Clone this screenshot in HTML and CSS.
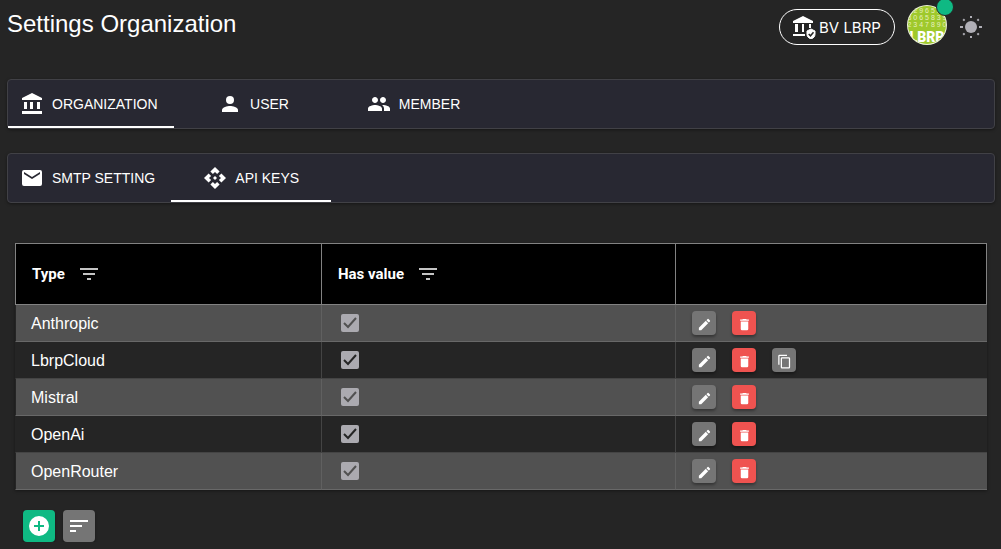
FILE: index.html
```html
<!DOCTYPE html>
<html lang="en">
<head>
<meta charset="utf-8">
<meta name="viewport" content="width=device-width, initial-scale=1">
<title>Settings Organization</title>
<link rel="stylesheet" href="styles.css">
</head>
<body>
<svg class="sprite" aria-hidden="true">
  <symbol id="bank" viewBox="0 0 24 24"><path d="M12 1 2 6v2h20V6zM4 10h3v7H4zM10 10h3v7h-3zM17 10h3v7h-3zM2 19h20v3H2z"/></symbol>
  <symbol id="filter" viewBox="0 0 24 24"><path d="M3 6h18v2H3zM6 11h12v2H6zM10 16h4v2h-4z"/></symbol>
  <symbol id="tick" viewBox="0 0 18 18"><path d="M3 9l4 4 8-9" fill="none" stroke="currentColor" stroke-width="2"/></symbol>
  <symbol id="pencil" viewBox="0 0 24 24"><path d="M3 17.250V21h3.750L17.810 9.940l-3.750-3.750L3 17.250zM20.710 7.040a1 1 0 0 0 0-1.410l-2.340-2.340a1 1 0 0 0-1.410 0l-1.830 1.830 3.750 3.750 1.830-1.830z"/></symbol>
  <symbol id="trash" viewBox="0 0 24 24"><path d="M6 19a2 2 0 0 0 2 2h8a2 2 0 0 0 2-2V7H6v12zM19 4h-3.500l-1-1h-5l-1 1H5v2h14V4z"/></symbol>
  <symbol id="copy" viewBox="0 0 24 24"><path d="M16 1H4a2 2 0 0 0-2 2v14h2V3h12V1zm3 4H8a2 2 0 0 0-2 2v14a2 2 0 0 0 2 2h11a2 2 0 0 0 2-2V7a2 2 0 0 0-2-2zm0 16H8V7h11v14z"/></symbol>
</svg>
<div class="page">
  <header class="header">
    <h1 class="title">Settings Organization</h1>
    <div class="tools">
      <button class="org-button" type="button">
        <svg class="icon" viewBox="0 0 24 24" aria-hidden="true"><path d="M11 1 1 6v2h20V6zM3 9h3v8H3zM10 9h2v8h-2zM17 9h2v4h-2zM1 19h12v2H1z"/><path d="M19 14l4 2v3c0 2.500-1.500 4.200-4 5-2.500-.800-4-2.500-4-5v-3z" stroke="currentColor" stroke-linejoin="round"/><path d="M16.700 19l1.800 1.800 3-3.500" fill="none" stroke="#252525" stroke-width="1.500"/></svg>
        <span>BV LBRP</span>
      </button>
      <button class="avatar" type="button" aria-label="Account">
        <svg viewBox="0 0 40 40" aria-hidden="true">
          <defs><clipPath id="round"><circle cx="20" cy="20" r="19"/></clipPath></defs>
          <circle cx="20" cy="20" r="20" fill="#eef3d8"/>
          <g clip-path="url(#round)">
            <rect width="40" height="40" fill="#9fc92c"/>
            <g class="digits" text-anchor="middle"><text x="20" y="8">2 9 6 5 1</text><text x="20" y="15">3 0 6 5 8 3 9</text><text x="20" y="22">2 3 4 7 8 9 0</text></g>
            <text class="avatar-word" x="20" y="37" text-anchor="middle">LBRP</text>
          </g>
        </svg>
        <span class="status"></span>
      </button>
      <button class="theme" type="button" aria-label="Switch theme">
        <svg class="icon" viewBox="0 0 24 24" aria-hidden="true"><circle cx="12" cy="12" r="6"/><path d="M12 1v2M12 21v2M1 12h3M20 12h3M4.200 4.200l1.400 1.400M18.400 18.400l1.400 1.400M4.200 19.800l1.400-1.400M18.400 5.600l1.400-1.400" stroke="currentColor" stroke-width="2"/></svg>
      </button>
    </div>
  </header>

  <nav class="tabs" aria-label="Scope">
    <button class="tab tab-long active" type="button"><svg class="icon" aria-hidden="true"><use href="#bank"/></svg>ORGANIZATION</button>
    <button class="tab" type="button"><svg class="icon" viewBox="0 0 24 24" aria-hidden="true"><circle cx="12" cy="8" r="4"/><path d="M12 14c-2.670 0-8 1.340-8 4v2h16v-2c0-2.660-5.330-4-8-4z"/></svg>USER</button>
    <button class="tab" type="button"><svg class="icon" viewBox="0 0 24 24" aria-hidden="true"><path d="M16 11c1.660 0 2.990-1.340 2.990-3S17.660 5 16 5s-3 1.340-3 3 1.340 3 3 3zm-8 0c1.660 0 2.990-1.340 2.990-3S9.660 5 8 5 5 6.340 5 8s1.340 3 3 3zm0 2c-2.330 0-7 1.170-7 3.500V19h14v-2.500c0-2.330-4.670-3.500-7-3.500zm8 0c-.290 0-.620.020-.970.050 1.160.840 1.970 1.970 1.970 3.450V19h6v-2.500c0-2.330-4.670-3.500-7-3.500z"/></svg>MEMBER</button>
  </nav>

  <nav class="tabs" aria-label="Organization settings">
    <button class="tab tab-long" type="button"><svg class="icon" viewBox="0 0 24 24" aria-hidden="true"><path d="M20 4H4a2 2 0 0 0-2 2v12a2 2 0 0 0 2 2h16a2 2 0 0 0 2-2V6a2 2 0 0 0-2-2zm0 4l-8 5-8-5V6l8 5 8-5v2z"/></svg>SMTP SETTING</button>
    <button class="tab active" type="button"><svg class="icon" viewBox="0 0 24 24" aria-hidden="true"><path d="M14 12l-2 2-2-2 2-2 2 2zm-2-6l2.120 2.120 2.500-2.500L12 1 7.380 5.620l2.500 2.500L12 6zm-6 6l2.120-2.120-2.500-2.500L1 12l4.620 4.620 2.500-2.500L6 12zm12 0l-2.120 2.120 2.500 2.500L23 12l-4.620-4.620-2.500 2.500L18 12zm-6 6l-2.120-2.120-2.500 2.500L12 23l4.620-4.620-2.500-2.500L12 18z"/></svg>API KEYS</button>
  </nav>

  <main class="content">
    <table class="keys">
      <thead>
        <tr>
          <th class="col-type" scope="col"><div class="heading">Type<button class="filter" type="button" aria-label="Filter type"><svg class="icon" aria-hidden="true"><use href="#filter"/></svg></button></div></th>
          <th class="col-value" scope="col"><div class="heading">Has value<button class="filter" type="button" aria-label="Filter has value"><svg class="icon" aria-hidden="true"><use href="#filter"/></svg></button></div></th>
          <td></td>
        </tr>
      </thead>
      <tbody>
        <tr>
          <td>Anthropic</td>
          <td><label class="check"><input type="checkbox" aria-label="Anthropic has value" checked disabled><svg aria-hidden="true"><use href="#tick"/></svg></label></td>
          <td><div class="actions"><button class="action" type="button" aria-label="Edit"><svg aria-hidden="true"><use href="#pencil"/></svg></button><button class="action danger" type="button" aria-label="Delete"><svg aria-hidden="true"><use href="#trash"/></svg></button></div></td>
        </tr>
        <tr>
          <td>LbrpCloud</td>
          <td><label class="check"><input type="checkbox" aria-label="LbrpCloud has value" checked disabled><svg aria-hidden="true"><use href="#tick"/></svg></label></td>
          <td><div class="actions"><button class="action" type="button" aria-label="Edit"><svg aria-hidden="true"><use href="#pencil"/></svg></button><button class="action danger" type="button" aria-label="Delete"><svg aria-hidden="true"><use href="#trash"/></svg></button><button class="action" type="button" aria-label="Copy"><svg aria-hidden="true"><use href="#copy"/></svg></button></div></td>
        </tr>
        <tr>
          <td>Mistral</td>
          <td><label class="check"><input type="checkbox" aria-label="Mistral has value" checked disabled><svg aria-hidden="true"><use href="#tick"/></svg></label></td>
          <td><div class="actions"><button class="action" type="button" aria-label="Edit"><svg aria-hidden="true"><use href="#pencil"/></svg></button><button class="action danger" type="button" aria-label="Delete"><svg aria-hidden="true"><use href="#trash"/></svg></button></div></td>
        </tr>
        <tr>
          <td>OpenAi</td>
          <td><label class="check"><input type="checkbox" aria-label="OpenAi has value" checked disabled><svg aria-hidden="true"><use href="#tick"/></svg></label></td>
          <td><div class="actions"><button class="action" type="button" aria-label="Edit"><svg aria-hidden="true"><use href="#pencil"/></svg></button><button class="action danger" type="button" aria-label="Delete"><svg aria-hidden="true"><use href="#trash"/></svg></button></div></td>
        </tr>
        <tr>
          <td>OpenRouter</td>
          <td><label class="check"><input type="checkbox" aria-label="OpenRouter has value" checked disabled><svg aria-hidden="true"><use href="#tick"/></svg></label></td>
          <td><div class="actions"><button class="action" type="button" aria-label="Edit"><svg aria-hidden="true"><use href="#pencil"/></svg></button><button class="action danger" type="button" aria-label="Delete"><svg aria-hidden="true"><use href="#trash"/></svg></button></div></td>
        </tr>
      </tbody>
    </table>
    <div class="footer">
      <button class="tool add" type="button" aria-label="Add"><svg class="icon" viewBox="0 0 24 24" aria-hidden="true"><path d="M12 2a10 10 0 1 0 0 20 10 10 0 0 0 0-20zm5 11h-4v4h-2v-4H7v-2h4V7h2v4h4z"/></svg></button>
      <button class="tool" type="button" aria-label="Sort"><svg class="icon" viewBox="0 0 24 24" aria-hidden="true"><path d="M3 6h18v2H3zM3 11h12v2H3zM3 16h6v2H3z"/></svg></button>
    </div>
  </main>
</div>
</body>
</html>
```
FILE: styles.css
```css
* { box-sizing: border-box; }

body {
  margin: 0;
  background: #252525;
  color: #fff;
  font-family: "Liberation Sans", Arial, sans-serif;
  font-size: 16px;
}

button {
  margin: 0;
  padding: 0;
  border: 0;
  background: none;
  color: inherit;
  font: inherit;
  cursor: pointer;
}

svg { display: block; fill: currentColor; }
.sprite { display: none; }
.icon { width: 24px; height: 24px; flex: none; }

.page { padding: 0 6px 0 7px; }

.header {
  display: flex;
  justify-content: space-between;
  align-items: flex-start;
}

.title {
  margin: 0;
  padding-top: 8px;
  font-size: 24px;
  line-height: 32px;
  font-weight: 400;
}

.tools {
  display: flex;
  align-items: center;
  gap: 12px;
  padding: 5px 12px 0 0;
}

.org-button {
  display: flex;
  align-items: center;
  gap: 3px;
  height: 36px;
  min-width: 116px;
  margin-top: 4px;
  padding: 0 12px;
  border: 1px solid #fff;
  border-radius: 18px;
  font-family: Inter, sans-serif;
  font-size: 15px;
}

.avatar { position: relative; width: 40px; height: 40px; }
.avatar svg { width: 40px; height: 40px; }
.digits { font: 7px "Liberation Sans", sans-serif; fill: #e6f0bd; }
.avatar-word { font: 900 14px Roboto, sans-serif; fill: #fff; }

.status {
  position: absolute;
  top: -7px;
  right: -7px;
  width: 18px;
  height: 18px;
  border: 1px solid #252525;
  border-radius: 50%;
  background: #0fb983;
}

.theme { margin-top: 4px; color: #b0afb6; }

.tabs {
  display: flex;
  height: 50px;
  margin-top: 24px;
  border: 1px solid #414146;
  border-radius: 4px;
  background: #282832;
  box-shadow: 0 1px 3px rgba(0, 0, 0, 0.4);
}

.header + .tabs { margin-top: 34px; }

.tab {
  display: flex;
  align-items: center;
  justify-content: center;
  gap: 8px;
  min-width: 160px;
  padding: 2px 12px 0;
  border-bottom: 2px solid transparent;
  font-size: 14px;
}

.tab-long { padding-right: 16px; }
.active { border-bottom-color: #fff; }

.content { padding: 40px 8px 0; }

.keys {
  width: 100%;
  table-layout: fixed;
  border-spacing: 0;
  box-shadow: 0 1px 3px rgba(0, 0, 0, 0.4);
}

.col-type { width: 307px; }
.col-value { width: 354px; }

.keys thead th,
.keys thead td {
  height: 62px;
  padding: 0 16px;
  border: 1px solid #828282;
  border-left-width: 0;
  background: #000;
}

.keys thead th:first-child { border-left-width: 1px; }

.heading {
  display: flex;
  align-items: center;
  gap: 12px;
  font-family: Roboto, sans-serif;
  font-size: 15px;
  font-weight: 700;
}

.filter { color: #c4c4c4; }

.keys tbody td {
  height: 37px;
  padding: 0 16px;
  border-right: 1px solid #606060;
  border-bottom: 1px solid #686868;
}

.keys tbody td:first-child { padding: 1px 15px 0; border-left: 1px solid #252525; }
.keys tbody td:last-child { border-right: 0; }
.keys tbody tr { --row: #252525; background: var(--row); }
.keys tbody tr:nth-child(odd) { --row: #515151; }
.keys tbody tr:nth-child(even) td { border-color: #444; }
.keys tbody tr:nth-child(even) td:first-child { border-left-color: #252525; }

.check { display: grid; width: 18px; margin-left: 3px; color: var(--row); }

.check input,
.check svg { grid-area: 1 / 1; width: 18px; height: 18px; }

.check input {
  margin: 0;
  appearance: none;
  border-radius: 2px;
  background: #abaab0;
}

.check svg { position: relative; }

.actions { display: flex; gap: 16px; }

.action,
.tool {
  display: grid;
  place-items: center;
  border-radius: 4px;
  background: #757575;
  box-shadow: 0 2px 3px rgba(0, 0, 0, 0.35);
}

.action { width: 24px; height: 24px; padding: 2px 0 0 1px; }
.action svg { width: 15px; height: 15px; }
.danger { background: #ef5350; }

.footer { display: flex; gap: 8px; padding: 20px 8px 0; }
.tool { width: 32px; height: 32px; }
.add { background: #0fb983; }
```
